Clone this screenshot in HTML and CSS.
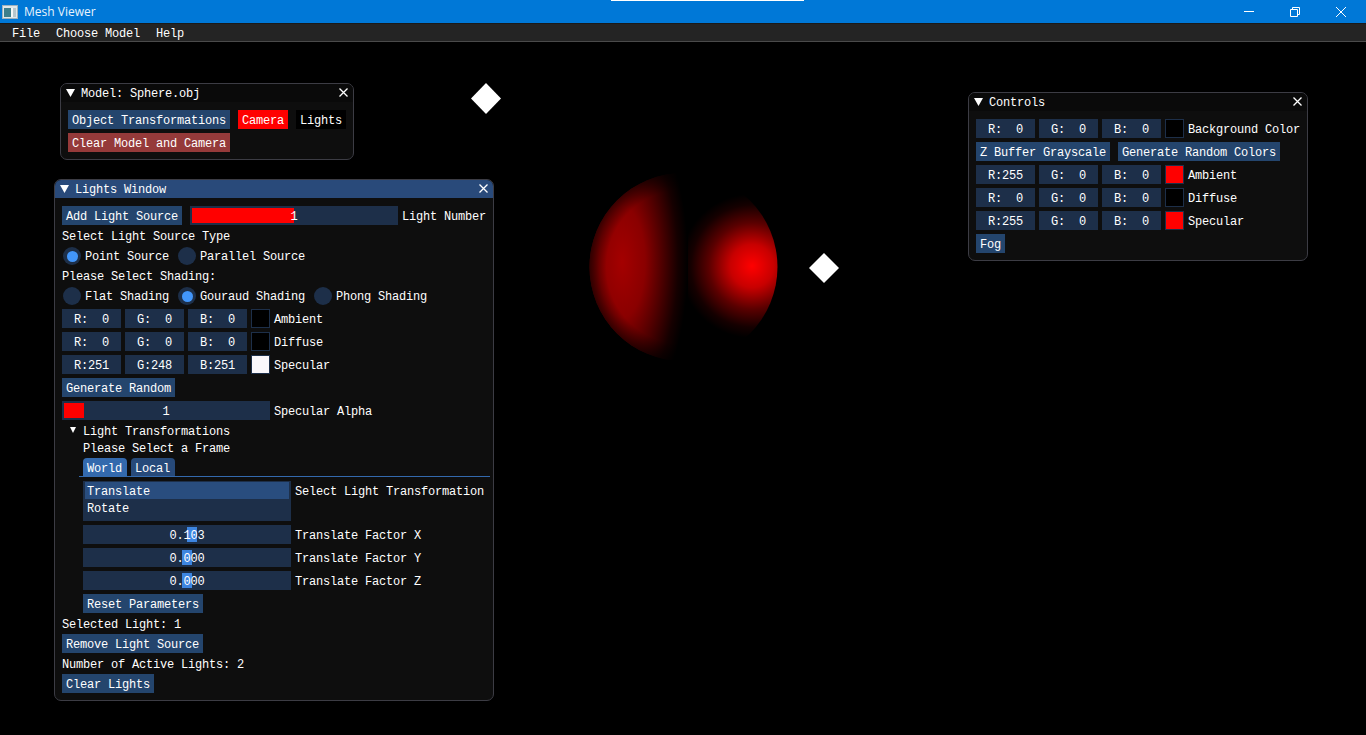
FILE: index.html
```html
<!DOCTYPE html>
<html lang="en">
<head>
    <meta charset="UTF-8">
    <title>Mesh Viewer</title>
    <link rel="stylesheet" href="styles.css">
</head>
<body>
    <div class="titlebar">
        <svg class="app-icon" width="16" height="14" viewBox="0 0 16 14">
            <rect x="0.5" y="0.5" width="15" height="13" fill="#dfe7ea" stroke="#9fb2bd"/>
            <rect x="2" y="3" width="7" height="9" fill="#3d7f8c"/>
            <rect x="9" y="3" width="2" height="9" fill="#f4f8f8"/>
            <rect x="11" y="3" width="3" height="9" fill="#b7c6cc"/>
        </svg>
        <span class="app-name">Mesh Viewer</span>
        <div class="win-buttons">
            <svg width="12" height="12" viewBox="0 0 12 12"><path d="M1 5.5h10" stroke="#fff" fill="none"/></svg>
            <svg width="12" height="12" viewBox="0 0 12 12"><path d="M1.5 3.5h7v7h-7zM3.5 3.5v-2h7v7h-2" stroke="#fff" fill="none"/></svg>
            <svg width="12" height="12" viewBox="0 0 12 12"><path d="M1 1l10 10M11 1L1 11" stroke="#fff" fill="none"/></svg>
        </div>
    </div>
    <div class="top-strip"></div>
    <div class="menubar">
        <span class="menu-item">File</span>
        <span class="menu-item">Choose Model</span>
        <span class="menu-item">Help</span>
    </div>

    <div class="desktop">
        <svg class="scene" width="1366" height="693" viewBox="0 42 1366 693">
            <defs>
                <clipPath id="ball"><circle cx="683.5" cy="267" r="94"/></clipPath>
                <radialGradient id="leftGlow" gradientUnits="userSpaceOnUse" cx="622" cy="262" r="66" gradientTransform="translate(622 262) scale(1 2.4) translate(-622 -262)">
                    <stop offset="0" stop-color="#a40000"/>
                    <stop offset="0.35" stop-color="#8a0000"/>
                    <stop offset="0.6" stop-color="#500000"/>
                    <stop offset="0.85" stop-color="#150000"/>
                    <stop offset="1" stop-color="#000"/>
                </radialGradient>
                <radialGradient id="rightGlow" gradientUnits="userSpaceOnUse" cx="752" cy="266" r="72">
                    <stop offset="0" stop-color="#ff0000"/>
                    <stop offset="0.3" stop-color="#c80000"/>
                    <stop offset="0.6" stop-color="#5a0000"/>
                    <stop offset="0.85" stop-color="#150000"/>
                    <stop offset="1" stop-color="#000"/>
                </radialGradient>
                <radialGradient id="rim" gradientUnits="userSpaceOnUse" cx="683.5" cy="267" r="94">
                    <stop offset="0.82" stop-color="#000" stop-opacity="0"/>
                    <stop offset="1" stop-color="#000" stop-opacity="0.55"/>
                </radialGradient>
            </defs>
            <g clip-path="url(#ball)">
                <rect x="580" y="165" width="108" height="200" fill="url(#leftGlow)"/>
                <rect x="580" y="165" width="108" height="200" fill="url(#rim)"/>
                <rect x="688" y="165" width="100" height="200" fill="url(#rightGlow)"/>
            </g>
            <polygon points="486,83 501,98.5 486,114 471,98.5" fill="#fff"/>
            <polygon points="824,253 839,268 824,283 809,268" fill="#fff"/>
        </svg>

        <div class="win win-model">
            <div class="win-title">
                <svg class="collapse" width="9" height="8" viewBox="0 0 9 8"><path d="M0 0h9L4.5 8z" fill="#fff"/></svg>
                <span class="win-name">Model: Sphere.obj</span>
                <svg class="close" width="9" height="9" viewBox="0 0 9 9"><path d="M0.5 0.5l8 8M8.5 0.5l-8 8" stroke="#fff" stroke-width="1.3" fill="none"/></svg>
            </div>
            <div class="win-body">
                <div class="row">
                    <span class="btn">Object Transformations</span>
                    <span class="btn btn-red">Camera</span>
                    <span class="btn btn-black">Lights</span>
                </div>
                <div class="row">
                    <span class="btn btn-clear">Clear Model and Camera</span>
                </div>
            </div>
        </div>

        <div class="win win-lights">
            <div class="win-title active">
                <svg class="collapse" width="9" height="8" viewBox="0 0 9 8"><path d="M0 0h9L4.5 8z" fill="#fff"/></svg>
                <span class="win-name">Lights Window</span>
                <svg class="close" width="9" height="9" viewBox="0 0 9 9"><path d="M0.5 0.5l8 8M8.5 0.5l-8 8" stroke="#fff" stroke-width="1.3" fill="none"/></svg>
            </div>
            <div class="win-body">
                <div class="row">
                    <span class="btn">Add Light Source</span>
                    <div class="slider">
                        <div class="grab-red grab-half"></div>
                        <span class="slider-val">1</span>
                    </div>
                    <span class="side-label label-near">Light Number</span>
                </div>
                <div class="txt">Select Light Source Type</div>
                <div class="row">
                    <span class="radio on">Point Source</span>
                    <span class="radio">Parallel Source</span>
                </div>
                <div class="txt">Please Select Shading:</div>
                <div class="row">
                    <span class="radio">Flat Shading</span>
                    <span class="radio on">Gouraud Shading</span>
                    <span class="radio">Phong Shading</span>
                </div>
                <div class="row tight">
                    <span class="field">R:  0</span><span class="field">G:  0</span><span class="field">B:  0</span>
                    <span class="swatch black"></span><span class="side-label">Ambient</span>
                </div>
                <div class="row tight">
                    <span class="field">R:  0</span><span class="field">G:  0</span><span class="field">B:  0</span>
                    <span class="swatch black"></span><span class="side-label">Diffuse</span>
                </div>
                <div class="row tight">
                    <span class="field">R:251</span><span class="field">G:248</span><span class="field">B:251</span>
                    <span class="swatch white"></span><span class="side-label">Specular</span>
                </div>
                <div class="row"><span class="btn">Generate Random</span></div>
                <div class="row tight">
                    <div class="slider">
                        <div class="grab-red grab-small"></div>
                        <span class="slider-val">1</span>
                    </div>
                    <span class="side-label">Specular Alpha</span>
                </div>
                <div class="tree-head">
                    <svg class="tree-arrow" width="6" height="6" viewBox="0 0 6 6"><path d="M0 0h6L3 6z" fill="#fff"/></svg>
                    <span>Light Transformations</span>
                </div>
                <div class="tree-body">
                    <div class="txt">Please Select a Frame</div>
                    <div class="tabs">
                        <span class="tab active">World</span>
                        <span class="tab">Local</span>
                    </div>
                    <div class="row tight list-row">
                        <div class="listbox">
                            <div class="list-item selected">Translate</div>
                            <div class="list-item">Rotate</div>
                        </div>
                        <span class="side-label">Select Light Transformation</span>
                    </div>
                    <div class="row tight">
                        <div class="slider">
                            <div class="grab-blue grab-x"></div>
                            <span class="slider-val">0.103</span>
                        </div>
                        <span class="side-label">Translate Factor X</span>
                    </div>
                    <div class="row tight">
                        <div class="slider">
                            <div class="grab-blue grab-zero"></div>
                            <span class="slider-val">0.000</span>
                        </div>
                        <span class="side-label">Translate Factor Y</span>
                    </div>
                    <div class="row tight">
                        <div class="slider">
                            <div class="grab-blue grab-zero"></div>
                            <span class="slider-val">0.000</span>
                        </div>
                        <span class="side-label">Translate Factor Z</span>
                    </div>
                    <div class="row"><span class="btn">Reset Parameters</span></div>
                </div>
                <div class="txt">Selected Light: 1</div>
                <div class="row"><span class="btn">Remove Light Source</span></div>
                <div class="txt">Number of Active Lights: 2</div>
                <div class="row"><span class="btn">Clear Lights</span></div>
            </div>
        </div>

        <div class="win win-controls">
            <div class="win-title">
                <svg class="collapse" width="9" height="8" viewBox="0 0 9 8"><path d="M0 0h9L4.5 8z" fill="#fff"/></svg>
                <span class="win-name">Controls</span>
                <svg class="close" width="9" height="9" viewBox="0 0 9 9"><path d="M0.5 0.5l8 8M8.5 0.5l-8 8" stroke="#fff" stroke-width="1.3" fill="none"/></svg>
            </div>
            <div class="win-body">
                <div class="row tight">
                    <span class="field">R:  0</span><span class="field">G:  0</span><span class="field">B:  0</span>
                    <span class="swatch black"></span><span class="side-label">Background Color</span>
                </div>
                <div class="row">
                    <span class="btn">Z Buffer Grayscale</span>
                    <span class="btn">Generate Random Colors</span>
                </div>
                <div class="row tight">
                    <span class="field">R:255</span><span class="field">G:  0</span><span class="field">B:  0</span>
                    <span class="swatch red"></span><span class="side-label">Ambient</span>
                </div>
                <div class="row tight">
                    <span class="field">R:  0</span><span class="field">G:  0</span><span class="field">B:  0</span>
                    <span class="swatch black"></span><span class="side-label">Diffuse</span>
                </div>
                <div class="row tight">
                    <span class="field">R:255</span><span class="field">G:  0</span><span class="field">B:  0</span>
                    <span class="swatch red"></span><span class="side-label">Specular</span>
                </div>
                <div class="row"><span class="btn">Fog</span></div>
            </div>
        </div>
    </div>
</body>
</html>
```

FILE: styles.css
```css
* {
    box-sizing: border-box;
}

body {
    margin: 0;
    height: 735px;
    overflow: hidden;
    background-color: #000;
    color: #fff;
    font-family: "Liberation Mono", "DejaVu Sans Mono", monospace;
    font-size: 12px;
    letter-spacing: -0.2px;
}

.titlebar {
    display: flex;
    align-items: center;
    height: 23px;
    padding-left: 2px;
    background-color: #0078d7;
}

.app-name {
    margin-left: 6px;
    font-family: "Open Sans", "Noto Sans", sans-serif;
    font-size: 12px;
    letter-spacing: 0;
    color: #e8f3fc;
}

.win-buttons {
    display: flex;
    gap: 34px;
    margin-left: auto;
    margin-right: 19px;
}

.top-strip {
    position: absolute;
    left: 611px;
    top: 0;
    width: 193px;
    height: 1px;
    background-color: #fff;
}

.menubar {
    display: flex;
    gap: 16px;
    height: 19px;
    padding: 1px 12px 0;
    background-color: #242424;
    border-top: 1px solid #1a1a1a;
    border-bottom: 1px solid #4a4a4a;
    line-height: 18px;
}

.desktop {
    position: relative;
    height: 693px;
}

.scene {
    position: absolute;
    left: 0;
    top: 0;
}

.win {
    position: absolute;
    background-color: #0e0e0e;
    border: 1px solid #3c3c44;
    border-radius: 7px;
    overflow: hidden;
}

.win-model {
    left: 60px;
    top: 41px;
    width: 294px;
}

.win-lights {
    left: 54px;
    top: 137px;
    width: 440px;
}

.win-controls {
    left: 968px;
    top: 50px;
    width: 340px;
}

.win-title {
    display: flex;
    align-items: center;
    height: 18px;
    padding: 0 5px;
    background-color: #0a0a0a;
}

.win-title.active {
    background-color: #294a7a;
}

.win-name {
    margin-top: 2px;
}

.collapse {
    margin-right: 6px;
}

.close {
    margin-left: auto;
    margin-bottom: 2px;
}

.win-body {
    display: flex;
    flex-direction: column;
    gap: 4px;
    padding: 8px 7px 7px;
}

/* the mono font sits higher than the imgui one, so line-heights are 4px over the box */
.row {
    display: flex;
    gap: 8px;
    height: 19px;
    line-height: 23px;
    white-space: nowrap;
}

.row.tight {
    gap: 4px;
}

.txt {
    height: 13px;
    line-height: 17px;
}

.btn {
    height: 19px;
    padding: 0 4px;
    background-color: #24456d;
}

.btn-red {
    background-color: #ff0000;
}

.btn-black {
    background-color: #000;
}

.btn-clear {
    background-color: #953a3a;
}

.field {
    width: 59px;
    height: 19px;
    text-align: center;
    white-space: pre;
    background-color: #1d2f49;
}

.swatch {
    width: 19px;
    height: 19px;
    border: 1px solid #1d2f49;
}

.swatch.black {
    background-color: #000;
}

.swatch.white {
    background-color: #f9f7fb;
}

.swatch.red {
    background-color: #ff0000;
}

.side-label {
    height: 19px;
}

.label-near {
    margin-left: -4px;
}

.slider {
    position: relative;
    width: 208px;
    height: 19px;
    text-align: center;
    background-color: #1d2f49;
}

.slider-val {
    position: relative;
}

.grab-red,
.grab-blue {
    position: absolute;
    top: 2px;
    height: 15px;
}

.grab-red {
    background-color: #ff0000;
}

.grab-blue {
    background-color: #3d85e0;
}

.grab-half {
    left: 2px;
    width: 102px;
}

.grab-small {
    left: 2px;
    width: 20px;
}

.grab-x {
    left: 104px;
    width: 10px;
}

.grab-zero {
    left: 99px;
    width: 10px;
}

.radio {
    position: relative;
    padding-left: 23px;
}

.radio::before {
    content: "";
    position: absolute;
    left: 1px;
    top: 1px;
    width: 18px;
    height: 18px;
    border-radius: 50%;
    background-color: #1d2f49;
}

.radio.on::after {
    content: "";
    position: absolute;
    left: 5px;
    top: 5px;
    width: 11px;
    height: 11px;
    border-radius: 50%;
    background-color: #4296fa;
}

.tree-head {
    display: flex;
    height: 13px;
    line-height: 17px;
}

.tree-arrow {
    margin-top: 3px;
    margin-left: 8px;
    margin-right: 7px;
}

.tree-body {
    display: flex;
    flex-direction: column;
    gap: 4px;
    padding-left: 21px;
}

.tabs {
    display: flex;
    gap: 4px;
    height: 19px;
    margin-left: -4px;
    margin-right: -4px;
    padding-left: 4px;
    border-bottom: 1px solid #3369ad;
}

.tab {
    width: 44px;
    height: 18px;
    padding-left: 4px;
    line-height: 22px;
    background-color: #274a7a;
    border-radius: 4px 4px 0 0;
}

.tab.active {
    background-color: #3369ad;
}

.list-row {
    height: 40px;
}

.listbox {
    width: 208px;
    height: 40px;
    padding: 1px 2px;
    background-color: #1d2f49;
}

.list-item {
    height: 17px;
    padding-left: 2px;
    line-height: 21px;
}

.list-item.selected {
    background-color: #294d7e;
}
```
